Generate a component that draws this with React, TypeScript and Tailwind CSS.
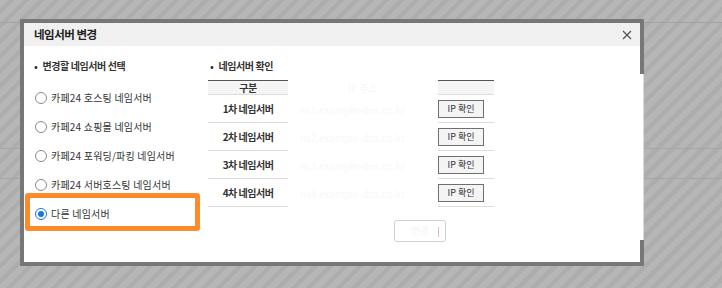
const font = { fontFamily: '"Noto Sans CJK KR", "Noto Sans", sans-serif' };

const options = [
  "카페24 호스팅 네임서버",
  "카페24 쇼핑몰 네임서버",
  "카페24 포워딩/파킹 네임서버",
  "카페24 서버호스팅 네임서버",
  "다른 네임서버",
];

const rows = ["1차 네임서버", "2차 네임서버", "3차 네임서버", "4차 네임서버"];

function Radio({ checked }: { checked?: boolean }) {
  if (checked) {
    return (
      <span className="flex h-[12px] w-[12px] shrink-0 items-center justify-center rounded-full border-[1.5px] border-[#1a73e8] bg-white">
        <span className="h-[6px] w-[6px] rounded-full bg-[#1a73e8]" />
      </span>
    );
  }
  return <span className="h-[12px] w-[12px] shrink-0 rounded-full border border-[#8a8a8a] bg-white" />;
}

function IpButton() {
  return (
    <button className="flex h-[18px] w-[46px] items-center justify-center border border-[#6f6f6f] bg-[#f4f4f4] text-[9px] leading-none text-[#333]">
      IP 확인
    </button>
  );
}

function Heading({ children }: { children: string }) {
  return (
    <div className="flex h-[14px] items-center text-[10px] font-bold leading-[14px] tracking-[-0.4px] text-[#333]">
      <span className="mr-[5px]">•</span>
      {children}
    </div>
  );
}

export default function App() {
  return (
    <div
      className="relative h-[288px] w-[722px] overflow-hidden bg-[image:repeating-linear-gradient(135deg,#b6b6b6_0px,#b6b6b6_6px,#adadad_6px,#adadad_10.6px)]"
      style={font}
    >
      {/* page behind the dim */}
      <div className="mt-[22px] h-px bg-[#a2a2a2]" />
      <div className="mt-[125px] h-px bg-[#a6a6a6]" />
      <div className="mt-[29px] h-px bg-[#a6a6a6]" />

      {/* modal */}
      <div className="absolute left-[20px] top-[19px] h-[247px] w-[624px] border-4 border-[#777] bg-white">
        <div className="flex h-[23px] items-center justify-between bg-[#f0f0f0] pl-[10px] pr-[8px]">
          <span className="text-[11.5px] font-bold tracking-[-0.5px] text-[#222]">네임서버 변경</span>
          <svg width="10" height="10" viewBox="0 0 10 10" className="mt-[1px]">
            <path d="M1 1L9 9M9 1L1 9" stroke="#555" strokeWidth="1.3" />
          </svg>
        </div>

        <div className="flex pl-[10px] pt-[13px]">
          {/* left: choose */}
          <div className="w-[174px]">
            <Heading>변경할 네임서버 선택</Heading>
            <div className="mt-[10px] flex flex-col">
              {options.map((o, i) => (
                <label key={o} className="flex h-[29px] items-center gap-[4px] pl-[1px]">
                  <Radio checked={i === 4} />
                  <span className="text-[10px] tracking-[0.2px] text-[#333]">{o}</span>
                </label>
              ))}
            </div>
          </div>

          {/* right: check */}
          <div className="w-[290px]">
            <div className="pl-[2px]">
              <Heading>네임서버 확인</Heading>
            </div>
            <div className="mt-[7px] grid grid-cols-[80px_150px_56px] text-[10px] text-[#333]">
              <div className="flex h-[15px] items-center justify-center border-y border-t-[#555] border-b-[#ddd] bg-[#f5f5f5] font-bold tracking-[-0.4px]">
                구분
              </div>
              <div className="flex h-[15px] items-center justify-center text-[#f7f7f7]">IP 주소</div>
              <div className="h-[15px] border-y border-t-[#555] border-b-[#ddd] bg-[#f5f5f5]" />
              {rows.map((r, i) => (
                <div key={r} className="contents">
                  <div className="flex h-[28px] items-center justify-center border-b border-[#ddd] font-bold tracking-[-0.5px]">
                    {r}
                  </div>
                  <div className="flex h-[28px] items-center pl-[12px] text-[#f8f8f8]">
                    ns{i + 1}.example-dns.co.kr
                  </div>
                  <div className="flex h-[28px] items-center border-b border-[#ddd]">
                    <IpButton />
                  </div>
                </div>
              ))}
            </div>
            <div className="relative ml-[186px] mt-[13px] flex h-[22px] w-[52px] items-center justify-center rounded-[3px] border border-[#cfcfcf] bg-white text-[9px] text-[#f3f3f3]">
              변경
              <span className="absolute right-[6px] top-[6px] h-[10px] w-px bg-[#f3b8b8]" />
            </div>
          </div>
        </div>

        {/* highlight box */}
        <div className="absolute left-[1px] top-[170px] h-[38px] w-[175px] rounded-[3px] border-[5px] border-[#ff8a2b]" />
      </div>

      {/* white overflow over the modal's right border */}
      <div className="absolute left-[640px] top-[74px] h-[166px] w-[4px] border-r border-[#dcdcdc] bg-white" />
    </div>
  );
}
